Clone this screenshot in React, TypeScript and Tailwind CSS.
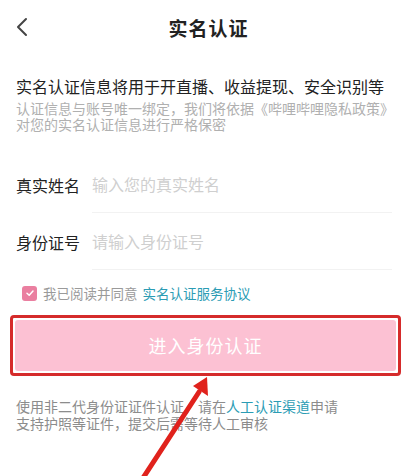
import React from 'react';

const font = { fontFamily: '"Noto Sans CJK SC", "Noto Sans", sans-serif' };

const FieldRow = ({ label, placeholder }: { label: string; placeholder: string }) => (
  <div className="flex items-center h-[57px]">
    <span className="w-[76px] text-[16px] text-[#222]">{label}</span>
    <div className="flex-1 h-full flex items-center border-b border-[#f2f2f2] mr-[25px]">
      <input
        className="w-full outline-none bg-transparent text-[16px] placeholder:text-[#cfcfcf]"
        placeholder={placeholder}
        style={font}
      />
    </div>
  </div>
);

export default function App() {
  return (
    <div className="relative w-[417px] h-[476px] overflow-hidden bg-white" style={font}>
      {/* header */}
      <div className="relative h-[56px] flex items-center justify-center">
        <svg className="absolute left-[15px] top-[17px]" width="14" height="20" viewBox="0 0 14 20">
          <path d="M11 2 L3 10 L11 18" fill="none" stroke="#444" strokeWidth="2" strokeLinecap="round" strokeLinejoin="round" />
        </svg>
        <h1 className="text-[19px] font-bold text-[#222] tracking-[1px]">实名认证</h1>
      </div>

      {/* intro */}
      <div className="px-[16px] pt-[19px]">
        <p className="text-[16px] leading-[22px] text-[#222]">实名认证信息将用于开直播、收益提现、安全识别等</p>
        <p className="mt-[3px] text-[14px] leading-[16px] text-[#b0b0b0]">
          认证信息与账号唯一绑定，我们将依据《哔哩哔哩隐私政策》
          <br />
          对您的实名认证信息进行严格保密
        </p>
      </div>

      {/* form */}
      <div className="pl-[16px] mt-[24px]">
        <FieldRow label="真实姓名" placeholder="输入您的真实姓名" />
        <FieldRow label="身份证号" placeholder="请输入身份证号" />
      </div>

      {/* agreement */}
      <div className="flex items-center pl-[22px] mt-[15px] h-[16px]">
        <span className="w-[15px] h-[15px] rounded-[3px] bg-[#ea7fa0] flex items-center justify-center">
          <svg width="10" height="10" viewBox="0 0 10 10">
            <path d="M2 5.2 L4.2 7.3 L8 3" fill="none" stroke="#fff" strokeWidth="1.5" strokeLinecap="round" strokeLinejoin="round" />
          </svg>
        </span>
        <span className="ml-[6px] text-[13.5px] text-[#9a9a9a]">我已阅读并同意</span>
        <span className="ml-[5px] text-[13.5px] text-[#2b9cb4]">实名认证服务协议</span>
      </div>

      {/* button with red annotation box */}
      <div className="mx-[10px] mt-[14px] w-[391px] h-[61px] rounded-[4px] border-[3px] border-[#d52b2b] p-[2px]">
        <button className="w-full h-full rounded-[3px] bg-[#fcc1d3] text-white text-[18px] tracking-[1px]" style={font}>
          进入身份认证
        </button>
      </div>

      {/* footer */}
      <div className="px-[16px] mt-[22px] text-[14px] leading-[17px] text-[#8c8c8c]">
        <p>
          使用非二代身份证证件认证，请在<span className="text-[#2b9cb4]">人工认证渠道</span>申请
        </p>
        <p>支持护照等证件，提交后需等待人工审核</p>
      </div>

      {/* red arrow annotation */}
      <svg className="absolute left-0 top-0 pointer-events-none" width="417" height="476" viewBox="0 0 417 476">
        <line x1="143" y1="478" x2="199" y2="392" stroke="#e0221c" strokeWidth="5" strokeLinecap="round" />
        <polygon points="207,377 208,396 193,386" fill="#e0221c" />
      </svg>
    </div>
  );
}
